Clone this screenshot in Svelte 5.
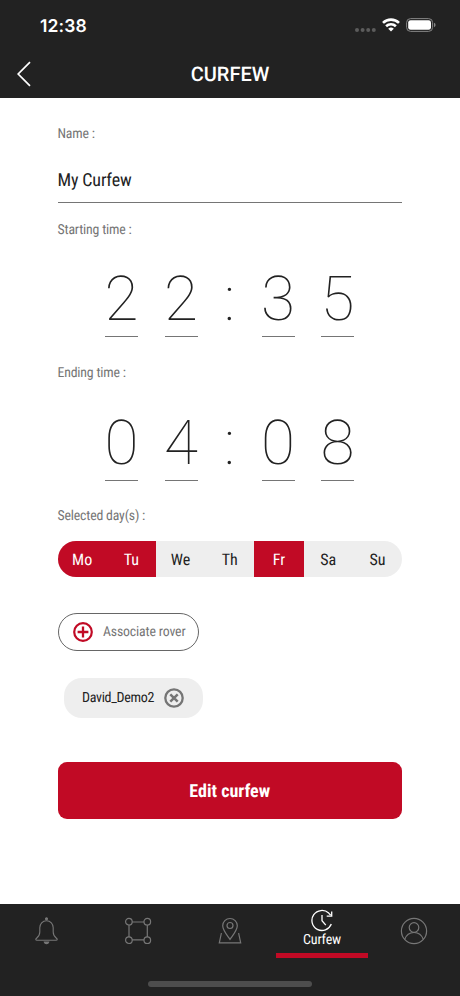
<script>
  let name = 'My Curfew';
  let times = [
    { label: 'Starting time :', digits: ['2', '2', '3', '5'] },
    { label: 'Ending time :', digits: ['0', '4', '0', '8'] },
  ];
  let days = [
    { label: 'Mo', selected: true },
    { label: 'Tu', selected: true },
    { label: 'We', selected: false },
    { label: 'Th', selected: false },
    { label: 'Fr', selected: true },
    { label: 'Sa', selected: false },
    { label: 'Su', selected: false },
  ];
  let rovers = ['David_Demo2'];

  function toggle(day) {
    day.selected = !day.selected;
    days = days;
  }

  function removeRover(rover) {
    rovers = rovers.filter((r) => r !== rover);
  }
</script>

<div class="phone">
  <header>
    <div class="status">
      <span class="clock">12:38</span>
      <div class="signals">
        <svg width="21" height="4" viewBox="0 0 21 4" fill="#5c5c5c">
          <circle cx="2" cy="2" r="2" />
          <circle cx="7.6" cy="2" r="2" />
          <circle cx="13.2" cy="2" r="2" />
          <circle cx="18.8" cy="2" r="2" />
        </svg>
        <svg width="18" height="14" viewBox="0 0 18 14" fill="none" stroke="#fff" stroke-width="2.6">
          <path d="M1 4.9a11.4 11.4 0 0 1 16 0" />
          <path d="M4.1 8.3a7 7 0 0 1 9.8 0" />
          <path d="M9 13.6L6.2 10.8a4 4 0 0 1 5.6 0z" fill="#fff" stroke="none" />
        </svg>
        <svg width="30" height="14" viewBox="0 0 30 14">
          <rect x=".6" y=".6" width="26" height="12.8" rx="4" fill="none" stroke="#858585" />
          <rect x="2.2" y="2.2" width="22.8" height="9.6" rx="2.4" fill="#fff" />
          <path d="M28 4.8q1.6.6 1.6 2.2t-1.6 2.2z" fill="#858585" />
        </svg>
      </div>
    </div>
    <div class="title">
      <svg class="back" width="14" height="26" viewBox="0 0 14 26" fill="none" stroke="#fff" stroke-width="1.7">
        <path d="M13 1.2L1.2 13L13 24.8" />
      </svg>
      <h1>CURFEW</h1>
    </div>
  </header>

  <main>
    <label for="name">Name :</label>
    <input id="name" bind:value={name} />

    {#each times as time}
      <p class="label">{time.label}</p>
      <div class="time">
        <span class="digit">{time.digits[0]}</span>
        <span class="digit">{time.digits[1]}</span>
        <span class="colon">:</span>
        <span class="digit">{time.digits[2]}</span>
        <span class="digit">{time.digits[3]}</span>
      </div>
    {/each}

    <p class="label">Selected day(s) :</p>
    <div class="days">
      {#each days as day}
        <button class:selected={day.selected} on:click={() => toggle(day)}>{day.label}</button>
      {/each}
    </div>

    <button class="associate">
      <svg width="20" height="20" viewBox="0 0 20 20" fill="none" stroke="#c10a25" stroke-width="2.2">
        <circle cx="10" cy="10" r="8.8" />
        <path d="M10 4.6v10.8M4.6 10h10.8" stroke-width="2.3" />
      </svg>
      Associate rover
    </button>

    {#each rovers as rover}
      <div class="chip">
        <span>{rover}</span>
        <button aria-label="Remove" on:click={() => removeRover(rover)}>
          <svg width="20" height="20" viewBox="0 0 20 20" fill="none" stroke="#757575" stroke-width="2.3">
            <circle cx="10" cy="10" r="8.7" />
            <path d="M6.3 6.3l7.4 7.4M13.7 6.3l-7.4 7.4" stroke-width="2.5" />
          </svg>
        </button>
      </div>
    {/each}

    <button class="edit">Edit curfew</button>
  </main>

  <nav>
    <div class="tabs">
      <div class="tab">
        <svg width="24" height="28" viewBox="0 0 24 28" fill="none" stroke="#777" stroke-width="1.1">
          <circle cx="12.5" cy="1.8" r="1" fill="#777" />
          <path d="M12.5 3.8c-4 0-6.7 3-6.7 7v4.2c0 3-1 4.4-3 6-1.6 1.3-1.2 2.2.2 2.2h19c1.4 0 1.8-.9.2-2.2-2-1.6-3-3-3-6v-4.2c0-4-2.7-7-6.7-7z" />
          <path d="M10.3 25h4.4q-.4 1.6-2.2 1.6T10.3 25z" fill="#777" />
        </svg>
      </div>
      <div class="tab">
        <svg width="28" height="28" viewBox="0 0 28 28" fill="none" stroke="#777" stroke-width="1.2">
          <circle cx="4.9" cy="4.7" r="3.3" />
          <circle cx="23.3" cy="4.7" r="3.3" />
          <circle cx="4.9" cy="23.2" r="3.3" />
          <circle cx="23.3" cy="23.2" r="3.3" />
          <path d="M8 5h12M8 22.8h12M5 8v12M23.3 8v12" />
        </svg>
      </div>
      <div class="tab">
        <svg width="24" height="28" viewBox="0 0 24 28" fill="none" stroke="#777" stroke-width="1.2">
          <path d="M12 22.5C8.500 17.500 4.700 13 4.700 8.800a7.300 7.300 0 0 1 14.600 0c0 4.200-3.800 8.700-7.300 13.700z" />
          <circle cx="12" cy="8.5" r="3" />
          <path d="M3.8 16.500h-.5L1.300 25.900h21.400l-2-9.400h-.5" />
        </svg>
      </div>
      <div class="tab active">
        <svg width="24" height="24" viewBox="0 0 24 24" fill="none" stroke="#fff" stroke-width="1.3">
          <path d="M21.3 16a10 10 0 1 1-2.6-10.900l2 2.200" />
          <path d="M21.7 3.400v4.800h-5" />
          <path d="M12 7v5.700l3.800 4.500" />
        </svg>
        <span>Curfew</span>
      </div>
      <div class="tab">
        <svg width="28" height="28" viewBox="0 0 28 28" fill="none" stroke="#777" stroke-width="1.2">
          <circle cx="14" cy="14" r="12.6" />
          <circle cx="14" cy="10.5" r="4.8" />
          <path d="M4.700 22.500c1.500-4.500 5-7 9.300-7s7.800 2.500 9.300 7" />
        </svg>
      </div>
    </div>
    <div class="home"></div>
  </nav>
</div>

<style>
  :global(body) {
    margin: 0;
    background: #fff;
  }
  .phone {
    display: flex;
    flex-direction: column;
    width: 460px;
    height: 996px;
    overflow: hidden;
    background: #fff;
    font-family: 'Roboto Condensed', Roboto, sans-serif;
    font-stretch: 75%;
    text-rendering: geometricPrecision;
    color: #222;
  }
  button {
    padding: 0;
    border: 0;
    background: none;
    font: inherit;
    color: inherit;
    text-rendering: inherit;
  }
  svg {
    display: block;
    flex: none;
  }
  header {
    height: 98px;
    flex: none;
    background: #222;
    color: #fff;
  }
  .status {
    display: flex;
    align-items: center;
    justify-content: space-between;
    height: 51px;
    padding: 0 24px 0 40px;
  }
  .clock {
    padding-top: 1px;
    font: 600 17.5px Inter, sans-serif;
    letter-spacing: 0.15px;
  }
  .signals {
    display: flex;
    align-items: center;
    gap: 6px;
    margin-top: -1px;
  }
  .signals svg:first-child {
    margin-top: 9px;
  }
  .title {
    display: grid;
    grid-template-columns: 60px 1fr 60px;
    align-items: center;
    height: 45px;
  }
  .back {
    margin-left: 17px;
  }
  h1 {
    margin: 0;
    font: 500 20px Roboto, sans-serif;
    text-align: center;
  }
  main {
    flex: 1;
    padding: 0 58px 0 57.5px;
  }
  label,
  .label {
    display: block;
    height: 18px;
    margin: 0;
    font-size: 13.8px;
    line-height: 20px;
    letter-spacing: -0.18px;
    color: #757575;
  }
  label {
    padding-top: 26px;
  }
  input {
    display: block;
    box-sizing: border-box;
    width: 100%;
    height: 44px;
    margin: 17px 0;
    padding: 0;
    border: 0;
    border-bottom: 1px solid #757575;
    outline: none;
    font: inherit;
    font-size: 18px;
    font-stretch: 75%;
    letter-spacing: -0.15px;
    text-rendering: inherit;
    color: #222;
  }
  .time {
    display: flex;
    height: 99px;
    margin: 0 0 26px 47.5px;
    box-sizing: border-box;
    padding-top: 29px;
    font: 100 62px/65px Roboto, sans-serif;
  }
  .time + .label + .time {
    padding-top: 30px;
  }
  .digit {
    width: 33px;
    height: 69px;
    margin-right: 26.5px;
    border-bottom: 1px solid #757575;
    display: flex;
    justify-content: center;
  }
  .colon {
    width: 10px;
    margin-right: 27.5px;
    text-align: center;
  }
  .days {
    display: flex;
    height: 36px;
    margin-top: 17px;
    overflow: hidden;
    border-radius: 18px;
    background: #eee;
  }
  .days button {
    flex: 1;
    font-size: 16px;
  }
  .days .selected {
    background: #c10a25;
    color: #fff;
  }
  .associate {
    display: flex;
    align-items: center;
    gap: 10px;
    box-sizing: border-box;
    width: 141.5px;
    height: 38px;
    margin-top: 36px;
    padding-left: 14.5px;
    border: 1px solid #666;
    border-radius: 19px;
    font-size: 13.8px;
    letter-spacing: -0.15px;
    color: #757575;
  }
  .chip {
    display: flex;
    align-items: center;
    justify-content: space-between;
    box-sizing: border-box;
    width: 139px;
    height: 40px;
    margin: 27px 0 0 6.5px;
    padding: 0 19px 0 18px;
    border-radius: 18px;
    background: #eee;
    font-size: 14px;
    letter-spacing: -0.3px;
  }
  .edit {
    width: 100%;
    height: 57px;
    margin-top: 44px;
    padding-top: 1px;
    border-radius: 9px;
    background: #c10a25;
    color: #fff;
    font-size: 18px;
    font-weight: 700;
  }
  nav {
    height: 92px;
    flex: none;
    background: #222;
  }
  .tabs {
    display: flex;
    height: 54px;
  }
  .tab {
    display: flex;
    flex: 1;
    flex-direction: column;
    align-items: center;
    justify-content: center;
    box-sizing: border-box;
  }
  .active {
    justify-content: flex-start;
    padding-top: 4px;
    border-bottom: 5px solid #c10a25;
    color: #fff;
    font-size: 14px;
    line-height: 17px;
    letter-spacing: -0.2px;
  }
  .home {
    width: 164px;
    height: 6px;
    margin: 23px auto 0;
    border-radius: 3px;
    background: #4d4d4d;
  }
</style>
